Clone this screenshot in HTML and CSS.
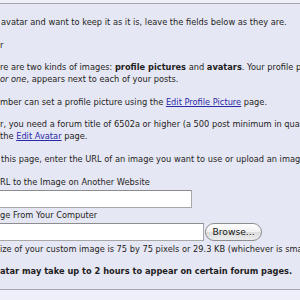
FILE: index.html
```html
<!DOCTYPE html>
<html>
<head>
<meta charset="utf-8">
<link rel="stylesheet" href="styles.css">
</head>
<body>
<div class="panel">
  <p class="lead">avatar and want to keep it as it is, leave the fields below as they are.</p>
  <p>r</p>
  <p>re are two kinds of images: <b>profile pictures</b> and <b>avatars</b>. Your profile picture appears on your profile page<br><i>or one</i>, appears next to each of your posts.</p>
  <p>mber can set a profile picture using the <a href="#">Edit Profile Picture</a> page.</p>
  <p>r, you need a forum title of 6502a or higher (a 500 post minimum in quality posts) to use<br>the <a href="#">Edit Avatar</a> page.</p>
  <p class="lead">this page, enter the URL of an image you want to use or upload an image from your computer.</p>
  <div class="form">
    <label class="field-label">RL to the Image on Another Website</label>
    <input class="text url" type="text">
    <label class="field-label second">ge From Your Computer</label>
    <div class="file-row">
      <input class="text file" type="text">
      <button class="browse" type="button">Browse...</button>
    </div>
    <p class="note">ize of your custom image is 75 by 75 pixels or 29.3 KB (whichever is smaller).</p>
    <p class="warn">atar may take up to 2 hours to appear on certain forum pages.</p>
  </div>
</div>
</body>
</html>
```
FILE: styles.css
```css
html, body {
  margin: 0;
  padding: 0;
  background: #eeeff8;
  overflow: hidden;
}
body {
  font-family: "DejaVu Sans", Verdana, sans-serif;
  font-size: 8.25px;
  color: #1e1e22;
  padding-top: 3px;
}
.panel {
  background: #e6e7f4;
  border-top: 1px solid #a4a5ae;
  border-bottom: 1px solid #a4a5ae;
  padding: 12px 0 0 0;
  white-space: nowrap;
  height: 287px;
  box-sizing: border-box;
  overflow: hidden;
}
p {
  margin: 0 0 10.6px 0;
  line-height: 12px;
}
.lead {
  padding-left: 1px;
}
a {
  color: #2a2aa8;
  text-decoration: underline;
}
.form {
  display: flex;
  flex-direction: column;
}
.field-label {
  line-height: 12px;
  display: block;
}
.text {
  box-sizing: border-box;
  height: 18px;
  border: 1px solid #a7a7a7;
  border-top-color: #8c8c8c;
  background: #fff;
  margin: 2px 0 0 -10px;
  padding: 0;
  font: inherit;
}
.url {
  width: 202px;
}
.second {
  margin-top: 1px;
}
.file-row {
  display: flex;
  align-items: center;
  gap: 1px;
  margin-top: 2px;
}
.file-row .text {
  margin-top: 0;
  width: 214px;
}
.browse {
  box-sizing: border-box;
  height: 18px;
  width: 57px;
  border: 1px solid #8e8e8e;
  border-radius: 9px;
  background: linear-gradient(#ffffff, #f0f0f0 50%, #dcdcdc 51%, #ececec);
  font-family: "DejaVu Sans", Verdana, sans-serif;
  font-size: 9.2px;
  color: #111;
  padding: 0;
}
.note {
  margin-top: 2px;
}
.warn {
  font-weight: bold;
  margin: 0;
}
```
